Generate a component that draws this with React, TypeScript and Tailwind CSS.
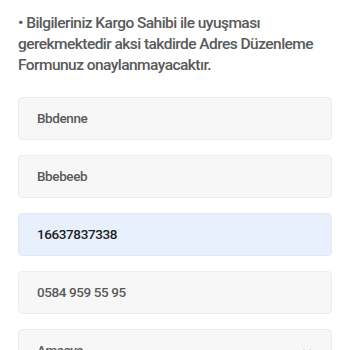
import React from 'react';

const fields = [
  { value: 'Bbdenne' },
  { value: 'Bbebeeb' },
  { value: '16637837338', autofill: true },
  { value: '0584 959 55 95' },
];

export default function App() {
  return (
    <div className="w-[350px] h-[350px] overflow-hidden bg-white px-[18px] pt-[13px]" style={{ fontFamily: 'Roboto, sans-serif' }}>
      <p className="text-[15.5px] leading-[21px] font-medium tracking-[-0.55px] text-[#5a5a5a]">
        • Bilgileriniz Kargo Sahibi ile uyuşması gerekmektedir aksi takdirde Adres Düzenleme Formunuz onaylanmayacaktır.
      </p>
      <div className="mt-[21px] flex flex-col gap-[15px]">
        {fields.map((f, i) => (
          <div
            key={i}
            className={
              f.autofill
                ? 'h-[43px] rounded-[4px] border border-[#e3e8f2] bg-[#e8f0fe] px-[18px] flex items-center text-[13.5px] font-medium tracking-[-0.4px] text-[#222]'
                : 'h-[43px] rounded-[4px] border border-[#ececec] bg-[#f7f7f7] px-[18px] flex items-center text-[13.5px] font-medium tracking-[-0.4px] text-[#5a5a5a]'
            }
          >
            {f.value}
          </div>
        ))}
        <div className="h-[43px] rounded-[4px] border border-[#ececec] bg-[#f7f7f7] px-[18px] flex items-center justify-between text-[13.5px] font-medium tracking-[-0.4px] text-[#5a5a5a]">
          <span>Amasya</span>
          <svg width="12" height="12" viewBox="0 0 24 24" fill="none" stroke="#999" strokeWidth="2"><path d="M6 9l6 6 6-6" /></svg>
        </div>
      </div>
    </div>
  );
}
